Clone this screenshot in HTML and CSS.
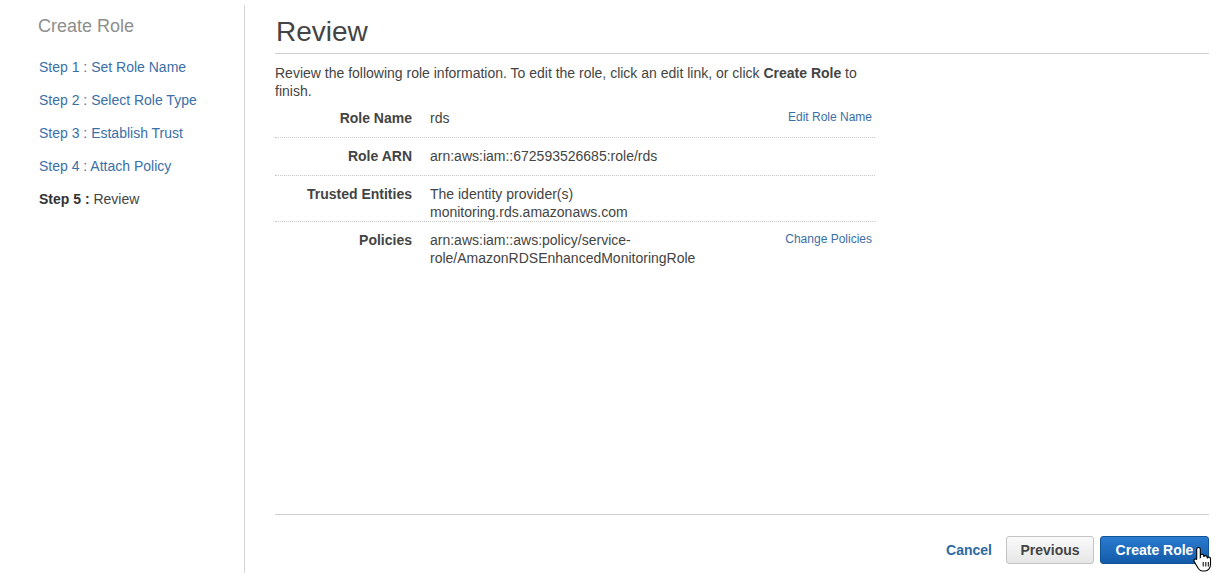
FILE: index.html
```html
<!DOCTYPE html>
<html lang="en">
<head>
  <meta charset="UTF-8">
  <title>Create Role</title>
  <link rel="stylesheet" href="styles.css">
</head>
<body>
  <!-- Wizard steps -->
  <div class="lateral">
    <div class="lateral-titulo">Create Role</div>
    <ul class="passos">
      <li><a href="#">Step 1 : Set Role Name</a></li>
      <li><a href="#">Step 2 : Select Role Type</a></li>
      <li><a href="#">Step 3 : Establish Trust</a></li>
      <li><a href="#">Step 4 : Attach Policy</a></li>
      <li class="atual"><b>Step 5 :</b> Review</li>
    </ul>
  </div>

  <!-- Review -->
  <div class="conteudo">
    <h1 class="titulo">Review</h1>
    <p class="intro">Review the following role information. To edit the role, click an edit link, or click <b>Create Role</b> to finish.</p>

    <div class="tabela">
      <div class="linha">
        <div class="rotulo">Role Name</div>
        <div class="valor">rds</div>
        <a class="editar" href="#">Edit Role Name</a>
      </div>
      <div class="linha">
        <div class="rotulo">Role ARN</div>
        <div class="valor">arn:aws:iam::672593526685:role/rds</div>
      </div>
      <div class="linha">
        <div class="rotulo">Trusted Entities</div>
        <div class="valor">The identity provider(s)<br>monitoring.rds.amazonaws.com</div>
      </div>
      <div class="linha">
        <div class="rotulo">Policies</div>
        <div class="valor">arn:aws:iam::aws:policy/service-<br>role/AmazonRDSEnhancedMonitoringRole</div>
        <a class="editar" href="#">Change Policies</a>
      </div>
    </div>

    <div class="rodape">
      <a class="cancelar" href="#">Cancel</a>
      <button class="botao botao-cinza">Previous</button>
      <button class="botao botao-azul">Create Role
        <svg class="cursor" width="20" height="26" viewBox="0 0 20 26">
          <path d="M5.5 1.5c1 0 1.8.8 1.8 1.8v8.2l.1-.1V9.8c0-.9.8-1.6 1.7-1.6s1.7.7 1.7 1.6v1.2c.1-.8.8-1.4 1.7-1.4s1.7.7 1.7 1.6v1.1c.2-.7.8-1.2 1.6-1.200.9 0 1.7.7 1.7 1.6v5.8c0 3.5-2.4 6.5-5.6 6.5H9.6c-1.9 0-3.2-.9-4.3-2.5L1.2 15.6c-.5-.8-.3-1.8.5-2.3.7-.4 1.6-.2 2.1.4l-.1-.1V3.3c0-1 .8-1.8 1.8-1.8z" fill="#fff" stroke="#000" stroke-width="1.1"/>
          <path d="M10.2 16v4.5M12.8 16v4.5M15.3 16v4.5" stroke="#000" stroke-width="1"/>
        </svg>
      </button>
    </div>
  </div>
</body>
</html>
```

FILE: styles.css
```css
body, html {
  margin: 0;
  padding: 0;
  height: 100%;
  overflow: hidden;
  font-family: "Liberation Sans", Arial, sans-serif;
  font-size: 14px;
  color: #444;
  background: #fff;
}

body {
  display: flex;
  padding-top: 5px;
  box-sizing: border-box;
}

a {
  color: #3a6fa7;
  text-decoration: none;
}

/* Lateral */
.lateral {
  width: 244px;
  flex-shrink: 0;
  border-right: 1px solid #d6d6d6;
}

.lateral-titulo {
  font-size: 18px;
  color: #8e8e8e;
  margin: 10px 0 0 38px;
  line-height: 22px;
}

.passos {
  list-style: none;
  margin: 21px 0 0 39px;
  padding: 0;
}

.passos li {
  font-size: 14px;
  line-height: 18px;
  margin-bottom: 15px;
}

.passos .atual {
  color: #444;
}

.passos .atual b {
  color: #333;
}

/* Conteudo */
.conteudo {
  flex: 1;
  display: flex;
  flex-direction: column;
  margin: 0 9px 0 30px;
}

.titulo {
  font-size: 28px;
  font-weight: normal;
  color: #444;
  line-height: 32px;
  margin: 0;
  padding: 11px 0 5px 1px;
  border-bottom: 1px solid #d0d0d0;
}

.intro {
  width: 600px;
  margin: 10px 0 0;
  line-height: 18px;
}

.tabela {
  width: 600px;
}

.linha {
  display: flex;
  align-items: flex-start;
  padding-top: 9px;
  min-height: 28px;
  line-height: 18px;
  border-bottom: 1px dotted #c8c8c8;
}

.linha:last-child {
  border-bottom: none;
}

.rotulo {
  width: 137px;
  text-align: right;
  font-weight: bold;
  color: #444;
  flex-shrink: 0;
}

.valor {
  flex: 1;
  margin-left: 18px;
}

.editar {
  font-size: 12px;
  margin-right: 3px;
  line-height: 16px;
}

/* Rodape */
.rodape {
  margin-top: auto;
  border-top: 1px solid #d0d0d0;
  padding: 21px 0 9px;
  display: flex;
  justify-content: flex-end;
  align-items: center;
}

.cancelar {
  font-weight: bold;
  color: #2d6aa3;
  margin-right: 14px;
}

.botao {
  position: relative;
  height: 28px;
  border-radius: 3px;
  font-family: "Liberation Sans", Arial, sans-serif;
  font-size: 14px;
  font-weight: bold;
  padding: 0;
  cursor: pointer;
}

.botao-cinza {
  width: 88px;
  color: #444;
  border: 1px solid #c4c4c4;
  background: linear-gradient(#fafafa, #e6e6e6);
  margin-right: 6px;
}

.botao-azul {
  width: 109px;
  color: #fff;
  border: 1px solid #11539b;
  background: linear-gradient(#2b7bd0, #135ba9);
}

.cursor {
  position: absolute;
  left: 92px;
  top: 9px;
}
```
